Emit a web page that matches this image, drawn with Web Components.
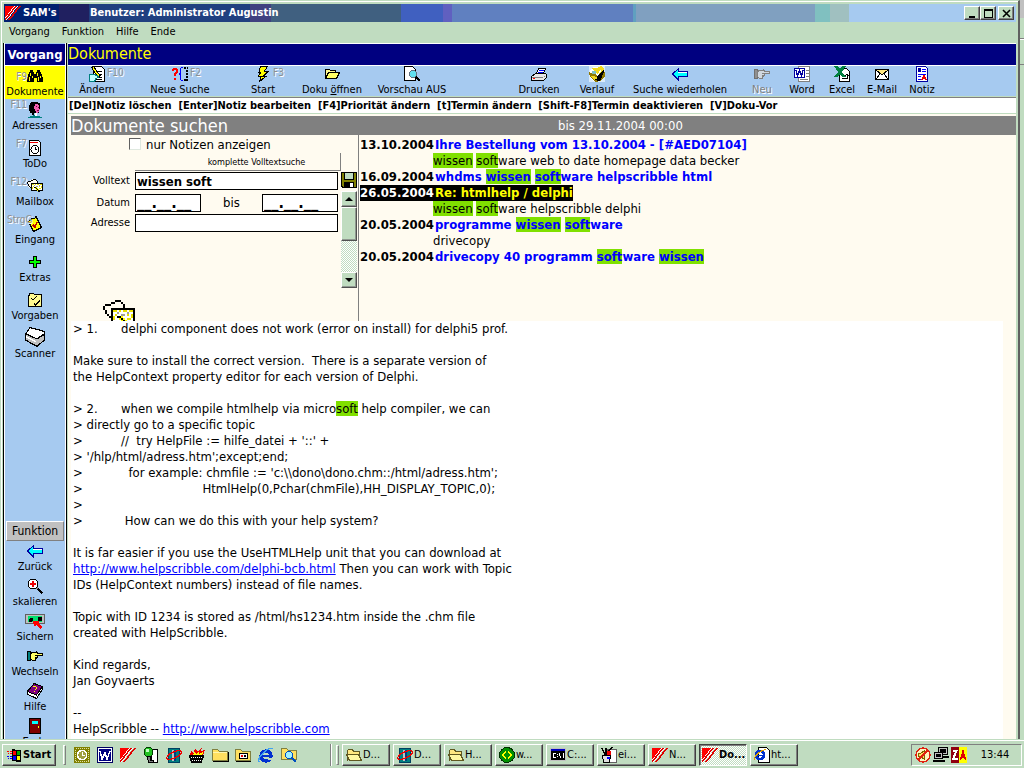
<!DOCTYPE html>
<html lang="de">
<head>
<meta charset="utf-8">
<title>SAM's</title>
<style>
  :root {
    --face: #c0dcc0; --blue: #a6caf0; --cream: #fffbf0; --navy: #000080; --shade: #808080; --hit: #80e000;
    font: 13px/16px "DejaVu Sans Condensed", Tahoma, "DejaVu Sans", sans-serif;
    color: #000;
  }
  html, body { height: 100%; }
  body { margin: 0; overflow: hidden; background: var(--face); }
</style>
</head>
<body>
<sam-desktop></sam-desktop>

<script>
const ICONS = {
  logo: '<path fill="#f00" d="M0 1h9L0 14z"/><path fill="#e00000" d="M14 1h2L5 15H3zM10 1h2L1 15H0v-1z"/><path fill="#fff" d="M9 1h1L0 14v-1zM12 1h1L2 15H1z"/>',
  binocular: '<path d="M3 2h3v2h1v2h2V4h1V2h3v2h1v2h1v3h1v5h-6v-4H7v4H0V9h1V6h1V4h1z"/><path fill="#ff0" d="M3 5h1v3H3zM2 9h1v4H2zM10 5h1v3h-1zM11 9h1v4h-1zM5 8h1v2H5zM13 8h1v2h-1z"/>',
  face: '<path d="M4 0h7v1h2v7h-1v3H7v2H5v-2H3V9H2V3h1V1h1z"/><path fill="#f060b0" d="M8 2h3v1h1v4h1v1h-1v2h-1v1H9V9H8V7H7V4h1z"/><path fill="#800040" d="M9 4h1v1H9zM11 5h1v1h-1zM10 8h2v1h-2z"/><path fill="#008080" d="M1 16v-1h2v-1h3v-1h4v1h3v1h2v1z"/><path fill="#fff" d="M8 11h2v3H8z"/>',
  clock: '<path fill="#fff" stroke="#000" d="M2.500.5h9l2 2v13h-11z"/><path fill="#e00" d="M3 2h8v1H3z"/><circle cx="8" cy="9.500" r="4" fill="#fff" stroke="#000"/><path fill="none" stroke="#000" d="M8.500 7v2.500H10"/>',
  cards: '<path fill="#fffbf0" d="M0 4 6 1l4 1 1 4-6 5-3-1z"/><path d="M6 1h3v1H6zM4 2h2v1H4zM9 2h1v1H9zM3 3h1v1H3zM10 3h1v2h-1zM1 3h2v1H1zM0 4h1v2H0zM1 6h1v2H1zM2 8h1v1H2zM3 9h1v1H3z"/><path fill="#fff" stroke="#000" d="M4.500 5.500h11v7h-11z"/><path fill="#e8e000" d="M5 6h2v1H5zM8 6h1v1H8zM10 6h2v1h-2zM13 6h2v1h-2zM6 8h1v1H6zM12 8h1v1h-1zM14 8h1v2h-1zM5 9h1v2H5zM12 10h2v1h-2z"/><path fill="#a0a0a0" d="M7 7h1v1H7zM9 8h2v1H9zM12 7h1v1h-1z"/><path d="M7 9h2v1H7zM9 10h1v1H9zM10 11h1v1h-1zM11 12h2v2h-2z"/><path fill="#ff0" d="M9 9h1v1H9zM10 10h1v1h-1zM11 11h1v1h-1zM8 10h1v1H8zM9 11h1v1H9zM10 12h1v1h-1z"/>',
  note: '<path fill="#ff0" stroke="#000" d="M1.500 5.500 4 4V2l3 1 2-2.500 5.500 11-8 4z"/><path fill="none" stroke="#c00000" stroke-width="1.500" d="M6 9l2 2 2-5"/>',
  plus: '<path fill="#0f0" stroke="#000" d="M6.500 2.500h3v4h4v3h-4v4h-3v-4h-4v-3h4z"/>',
  checks: '<path fill="#fffa90" stroke="#000" d="M1.500 3.500h1v-2h4l1 1h7v12h-13z"/><path fill="none" stroke="#000" stroke-width="1.400" d="M4 6l2 2 4-4M7 11l2 2 4-5"/>',
  scanner: '<path fill="#fff" stroke="#000" d="M.5 5.500 4 .5l11.500 3v2l-6 4z"/><path fill="#c0c0c0" stroke="#000" d="M.5 5.500l9 4 6-3.500v4.500l-6 5-9-5z"/><path stroke="#fff" d="M1 8l8 4"/>',
  back: '<path fill="#0ff" stroke="#0000a0" d="M.5 8 6.500 2.500v3h9v5h-9V14z"/><path fill="#fff" d="M6 6h9v1H6z"/>',
  zoom: '<circle cx="6" cy="6" r="5" fill="#fff" stroke="#000"/><path fill="#e00" d="M5 3h2v6H5zM3 5h6v2H3z"/><path stroke="#808080" stroke-width="2" d="M10 10l1.500 1.500"/><path stroke="#000" stroke-width="2.500" d="M11 11l4.500 4.500"/>',
  save: '<path fill="#c0c0c0" stroke="#606060" d="M-1.500 1.500h19v9h-19z"/><path fill="#00e070" d="M1 3h14v6H1z"/><circle cx="4" cy="7" r="2"/><circle cx="13" cy="6" r="2.500"/><path fill="#f00" d="M6 8h6v2h-1l4 4-1 2h-1l-4-4-1 1H7v-2H6z"/>',
  hand: '<path fill="#008080" stroke="#000" d="M.5 3.500h3v9h-3z"/><path fill="#ff6" stroke="#000" d="M5.500 4.500h3l1-1 1 2h5v2h-5v2h-1v1h-1v2h-3l-2-2v-5z"/><path stroke="#000" d="M8 7.500h3M8 9.500h2"/>',
  handoff: '<path fill="#909090" stroke="#707070" d="M.5 3.500h3v9h-3z"/><path fill="#d0d8e0" stroke="#808080" d="M5.500 4.500h3l1-1 1 2h5v2h-5v2h-1v1h-1v2h-3l-2-2v-5z"/><path stroke="#808080" d="M8 7.500h3M8 9.500h2"/>',
  book: '<path fill="#fff" stroke="#000" d="M.5 8l9 4 6-8v2l-6 9.500-9-4.500z"/><path fill="#800080" stroke="#000" d="M.5 8.500 7 .5l8.500 3-6 8.500z"/><path fill="#ff0" d="M6 3h3v1H6zM9 4h1v2H9zM8 6h1v1H8zM7 8h1v1H7z"/><path stroke="#fff" d="M2 11l7 3"/>',
  door: '<path fill="#800000" stroke="#000" d="M2.500.5h11v15h-11z"/><path fill="#0ff" d="M5 3h6v3H5z"/><path fill="#ff0" d="M11 8h1v2h-1z"/>',
  edit: '<path fill="#fff" stroke="#000" d="M4.500.5h8l3 3v12h-10z"/><path stroke="#000" d="M8 5.500h5M9 8.500h4M9 11.500h4M7 13.500h6"/><path fill="#ff0" stroke="#000" d="M2.500 1.500l2-1 6.500 9-1 1.500-2-1z"/><path fill="#c0ffff" stroke="#008080" d="M.5 8.500h4l4 1 1 2-3 1v2l-2 1h-4z"/>',
  newsearch: '<path fill="#f00" d="M0 3h1V2h4v1h1v4H5v1H4v2H2V7h1V6h1V4H2v1H0zM2 12h2v2H2z"/><path fill="none" stroke="#00f" d="M10.500 1.500h-1l-1 1V7l-1 1 1 1v4.500l1 1h1"/><path d="M12 1h2v2h-2zM15 1h1v2h-1zM14 4h2v2h-2zM14 7h2v2h-2zM14 10h2v2h-2zM12 13h4v2h-4z"/>',
  bolt: '<path fill="#ff0" stroke="#000" d="M5.500.5h7L9.500 5h4l-5 5h3L4.500 15.500 6.500 10H3.500L6 6H4z"/>',
  open: '<path fill="#fffa90" stroke="#000" d="M1.500 12.500v-9h4l1 1h5v2h-6z"/><path fill="#ff6" stroke="#000" d="M1.500 12.500l3-6h11l-3 6z"/>',
  preview: '<path fill="#fff" stroke="#000" d="M.5.5h8l3 3v11H.5z"/><circle cx="9" cy="8" r="3.500" fill="#60e0f0" stroke="#607080"/><path stroke="#000" stroke-width="2" d="M12 11l4 4"/>',
  printer: '<path fill="#fff" stroke="#000" d="M5.500 7.500l2-5h7l-2 5z"/><path fill="#00f" d="M8 4h5v1H8zM7 6h5v1H7z"/><path fill="#e8e8e8" stroke="#000" d="M.5 10.500l4-3h10l1 1v3l-3 3H.5z"/><path fill="#808080" d="M1 11h11v1H1zM13 10h1v1h-1z"/><path fill="#f00" d="M2 12h2v1H2z"/>',
  history: '<path fill="#fff" d="M0 0h16v16H0z" opacity=".6"/><circle cx="8" cy="8" r="7.500" fill="#fff"/><path fill="#907800" d="M0 6l4 2 5 1 6-7 1 8-4 5-6 1-5-5z"/><path d="M8 9 14 2l1 4-4 9-7-1 4-2z"/><path fill="#f0d820" d="M3 2h5l4-2 3 3-6 6-4-3zM2 10h3l4 2-4 2z"/><path stroke="#fff" d="M4 4l5 5M12 4l-4 6"/><path fill="#80c0c0" d="M3 5h4v3H3z"/>',
  word: '<path fill="#fff" stroke="#808080" d="M4.500.5h11v15h-11z"/><path fill="#808080" d="M12 4h3v1h-3zM12 7h3v1h-3zM12 10h3v1h-3zM6 13h8v1H6z"/><path fill="#fff" stroke="#0000a0" d="M.5 2.500h10v9H.5z"/><path fill="none" stroke="#0000a0" stroke-width="1.500" d="M2 4l1.500 5.500L5.500 5l2 4.500L9 4"/>',
  excel: '<path fill="#fff" stroke="#000" d="M5.500 2.500h7l3 3v10h-10z"/><path fill="#008040" d="M0 0h4l2 3 2-3h4L8 6l4 5H8L6 8l-3 3H0l4-5z"/><path fill="none" stroke="#000" d="M8 12.500h5V9M11 10l2-2 2 2"/>',
  mail: '<path fill="#fff" stroke="#000" d="M1.500 3.500h13v10h-13z"/><path fill="#ffe880" stroke="#000" d="M2 4l6 5 6-5M2 13l4-5M14 13l-4-5"/>',
  memo: '<path fill="#fff" stroke="#0000a0" d="M2.500.5h9l2 2v13h-11z"/><path fill="#00f" d="M8 3h4v1H8zM8 5h4v1H8zM4 8h8v1H4zM4 10h3v1H4zM4 13h3v1H4z"/><path fill="#0000a0" d="M4 2h3v4H4z"/><path fill="none" stroke="#e00" stroke-width="1.500" d="M8 14l2-4 2 4M8 12.500h4"/>',
  disk: '<path fill="#808000" stroke="#000" d="M.5.500h15v15H2L.5 14z"/><path fill="#c0dcc0" stroke="#000" d="M3.500.5h9v7h-9z"/><path d="M3 10h10v6H3z"/><path fill="#fff" d="M9 11h3v4H9z"/>',
  windows: '<path d="M6 2h3v1h6v12h-5v-1H6z"/><path fill="#f00" d="M7 4h3v4H7zM1 4h2v1H1zM4 4h2v1H4zM2 6h1v1H2zM4 6h2v1H4z"/><path fill="#0a0" d="M11 4h3v4h-3z"/><path fill="#00f" d="M7 9h3v4H7zM1 9h2v1H1zM4 9h2v1H4zM2 11h1v1H2zM4 11h2v1H4z"/><path fill="#ff0" d="M11 9h3v4h-3z"/>',
  outlook: '<path fill="#808000" d="M0 0h16v16H0z"/><path fill="none" stroke="#e0e0a0" stroke-dasharray="1 1" d="M1.500 1.500h13v13h-13z"/><circle cx="8" cy="8" r="4.500" fill="#a0a040" stroke="#fff" stroke-width="1.500"/><path fill="none" stroke="#fff" d="M8 5v3h3"/>',
  winword: '<path fill="#000060" d="M0 0h16v16H0z"/><path fill="#fff" d="M1 1h14v14H1z"/><path fill="#000080" d="M2 2h12v12H2z"/><path fill="none" stroke="#fff" stroke-width="1.500" d="M3 4l2 8 3-6 2 6 3-8"/>',
  globe: '<path fill="#fff" stroke="#000" d="M8.500 2.500h6v13h-6z"/><circle cx="5.500" cy="5" r="4.500" fill="#20c020" stroke="#004000"/><path fill="#c0ffc0" d="M3 2h3v3H3z"/><path fill="#808080" stroke="#000" d="M4.500 9.500h3v4h3v2h-5z"/>',
  orbit: '<path fill="#008080" stroke="#004060" d="M2.500 1.500h11v14h-11z"/><path fill="#c0c0c0" d="M6 3h4v11H6z"/><path fill="#004080" d="M8 3h2v11H8z"/><ellipse cx="8" cy="8" rx="8" ry="3" fill="none" stroke="#e00" stroke-width="1.200" transform="rotate(-25 8 8)"/>',
  flame: '<path fill="#e00" d="M1 9l1-5 3 2 1-5 3 4 4-5-1 4 4-1-2 6z"/><path fill="#ff0" d="M4 9l1-4 2 2 3-3v3l4-2-1 4z"/><path d="M0 8h15v3h-1l-1 5H2L1 11H0z"/><path stroke="#fff" stroke-dasharray="1 1" d="M2 10.500h11M3 13.500h9"/>',
  folder: '<path fill="#ffe060" stroke="#808040" d="M.5 13.500v-11h5l2 2h8v9z"/><path fill="#fff8b0" d="M1 5h14v1H1z"/><path d="M1 14h15v1H1zM16 5h1v10h-1z"/>',
  mailfolder: '<path fill="#ffe060" stroke="#808040" d="M.5 13.500v-11h5l2 2h8v9z"/><path fill="#fff" stroke="#000" d="M4.500 6.500h8v5h-8z"/><path fill="#e00" d="M6 8h2v2H6z"/><path d="M9 8h2v2H9zM1 14h15v1H1z"/>',
  ie: '<circle cx="8" cy="9" r="5" fill="none" stroke="#0030d0" stroke-width="3.500"/><path fill="#0030d0" d="M5 8h10v2H5z"/><path fill="#c0dcc0" d="M10 10.500h6v2h-6z"/><path fill="none" stroke="#40a0f0" stroke-width="1.500" d="M1 15C-1 11 9 0 15 1.500"/>',
  findfolder: '<path fill="#ffe060" stroke="#808040" d="M.5 12.500v-11h5l2 2h8v9z"/><circle cx="8" cy="8" r="3.500" fill="#a0f0ff" stroke="#0050c0"/><path stroke="#0050c0" stroke-width="2.500" d="M11 11l4 4"/>',
  openfolder: '<path fill="#ffe880" stroke="#605820" d="M1.500 13.500V4l1-1.500h4l1 2h6v3"/><path fill="#fff8a0" stroke="#605820" d="M.5 7.500h12l3 6h-12z"/>',
  web: '<circle cx="8" cy="8" r="7.500" fill="#009000" stroke="#003000"/><path fill="none" stroke="#ff0" stroke-width="2" d="M7 4.500 3.500 8 7 11.500M9 4.500 12.500 8 9 11.500"/>',
  console: '<path fill="#c0c0c0" d="M0 1h16v13H0z"/><path d="M1 4h14v9H1z"/><path fill="#0000c0" d="M1 2h14v2H1z"/><path fill="#fff" d="M3 6h3v1H3zM3 7h1v3H3zM3 10h3v1H3zM7 7h1v1H7zM7 9h1v1H7zM9 6h1v3H9zM10 9h1v2h-1zM13 6h1v5h-1z"/>',
  paint: '<path fill="#fff" stroke="#606060" d="M6.500 2.500h9v13h-9z"/><path fill="#e0e0e0" stroke="#000" d="M1.500 8.500h8l-1 7h-6z"/><path fill="#e00" d="M6 4h4v4H6z"/><path stroke="#000" stroke-width="1.500" d="M4 8 1 1M5 8 5 1M8 4l3-4"/><path fill="#00f" d="M6 10h3v2H6z"/>',
  iepage: '<path fill="#fff" stroke="#000" d="M4.500.5h8l3 3v12h-11z"/><circle cx="6" cy="8" r="4" fill="none" stroke="#0030d0" stroke-width="2.500"/><path stroke="#0030d0" stroke-width="1.500" d="M3 8.500h7"/><path fill="none" stroke="#e0a000" d="M0 13C0 9 8 2 12 3"/>',
  muted: '<circle cx="8" cy="8" r="7" fill="#fff4c0" stroke="#e02010" stroke-width="1.500"/><path fill="#ffe060" stroke="#806000" d="M3.500 6.500h2l4-3v9l-4-3h-2z"/><path stroke="#e02010" stroke-width="2" d="M13 3 3 13"/>',
  net: '<path fill="#c0c0c0" stroke="#000" d="M5.500.5h9v7h-9z"/><path d="M7 2h6v4H7z"/><path fill="#c0c0c0" stroke="#000" d="M1.500 5.500h8v6h-8z"/><path d="M3 7h5v3H3zM0 13h12v2H0zM9 9h7v2H9z"/>',
  za: '<path fill="#900010" d="M0 0h8v16H0z"/><path fill="#ff0" d="M8 0h8v16H8z"/><path fill="none" stroke="#fff" stroke-width="2" d="M1.500 4h4L2 12h4.500"/><path fill="none" stroke="#e00000" stroke-width="1.500" d="M9.500 13l2.500-9 2.500 9M10 10h4"/>'
};

function define(name, html, after) {
  const tpl = document.createElement('template');
  tpl.innerHTML = html;
  customElements.define(name, class extends HTMLElement {
    constructor() {
      super();
      this.attachShadow({ mode: 'open' }).append(tpl.content.cloneNode(true));
    }
    connectedCallback() { if (after) after(this, this.shadowRoot); }
  });
}

define('sam-icon', `<style>
  :host { display: block; flex: none; width: 16px; height: 16px; }
  svg { display: block; width: 100%; height: 100%; overflow: visible; }
</style><svg viewBox="0 0 16 16" fill="#000" shape-rendering="crispEdges" aria-hidden="true"></svg>`,
(el, root) => { root.querySelector('svg').innerHTML = ICONS[el.getAttribute('name')] || ''; });

define('title-bar', `<style>
  :host { display: flex; align-items: center; height: 18px; margin: 0 2px 0 1px; color: #fff; font-weight: bold; font-size: 11px;
    background: linear-gradient(90deg, #002070 5.4%, #202060 0 8.4%, #204080 0 24.3%, #404080 0 26.4%, #406080 0 39.2%,
      #4060c0 0 43.4%, #6060c0 0 44.3%, #6080c0 0 62.2%, #60a0c0 0 62.5%, #80a0c0 0 80.1%, #80c0c0 0 81.6%, #a0c0c0 0 83.5%, #a6caf0 0); }
  sam-icon { margin-left: 1px; }
  .app { width: 67px; margin-left: 2px; }
  .user { flex: 1; }
  button { width: 16px; height: 14px; padding: 0; border: 1px solid; border-color: #fff #404040 #404040 #fff; background: var(--face);
    box-shadow: inset -1px -1px #808080; display: grid; place-items: center; }
  button:last-of-type { margin: 0 2px; }
  svg { width: 9px; height: 9px; display: block; }
</style>
<sam-icon name="logo"></sam-icon><span class="app">SAM's</span><span class="user">Benutzer: Administrator Augustin</span>
<button aria-label="Minimieren"><svg viewBox="0 0 9 9"><path d="M1 7h6v2H1z"/></svg></button>
<button aria-label="Maximieren"><svg viewBox="0 0 9 9"><path d="M0 0h9v9H0zM1 2v6h7V2z" fill-rule="evenodd"/></svg></button>
<button aria-label="Schließen"><svg viewBox="0 0 9 9"><path d="M1 1l7 7M8 1 1 8" stroke="#000" stroke-width="1.600"/></svg></button>`);

define('menu-bar', `<style>
  :host { display: flex; gap: 12px; align-items: center; height: 19px; padding: 0 0 2px 6px; font-size: 11px; }
  button { font: inherit; color: inherit; background: none; border: 0; padding: 0; }
</style><button>Vorgang</button><button>Funktion</button><button>Hilfe</button><button>Ende</button>`);

define('side-item', `<style>
  :host { display: block; flex: none; height: 38px; font-size: 11px; }
  :host([first]) { height: 34px; }
  :host([tight]) { height: 35px; }
  :host([short]) { height: 33px; }
  :host([active]) { background: #ff0; }
  button { position: relative; display: flex; flex-direction: column; align-items: center; justify-content: flex-end; width: 100%; height: 100%;
    padding: 0; border: 0; background: none; font: inherit; line-height: 14px; color: #000; }
  sam-icon { margin-bottom: 1px; }
  :host([large]) sam-icon { width: 20px; height: 20px; margin: 0; }
  .key { position: absolute; left: 2px; width: 20px; top: 5px; color: #909090; font-size: 10px; line-height: 12px; text-shadow: 1px 1px #fff; text-align: right; white-space: nowrap; }
  :host([first]) .key { top: 0; }
  .key:empty { display: none; }
</style><button><sam-icon></sam-icon><slot></slot><span class="key"></span></button>`,
(el, root) => {
  root.querySelector('.key').textContent = el.getAttribute('key') || '';
  root.querySelector('sam-icon').setAttribute('name', el.getAttribute('icon'));
  root.querySelector('sam-icon').connectedCallback();
});

define('side-bar', `<style>
  :host { display: flex; flex-direction: column; flex: none; width: 60px; background: var(--blue); overflow: hidden;
    border: solid #fff; border-width: 0 1px; box-shadow: -1px 0 #000, 1px 0 #000; margin: 0 1px; }
  h2 { margin: 1px 0 0; height: 21px; flex: none; font-size: 13px; line-height: 22px; text-align: center; color: #fff; background: var(--navy); border-bottom: 1px solid #fff; }
  section { margin-top: auto; margin-bottom: -10px; }
  h3 { margin: 0 1px; font-weight: normal; font-size: 12px; line-height: 18px; text-align: center; background: #c0c0c0;
    border: 1px solid; border-color: #fff #808080 #808080 #fff; }
</style>
<h2>Vorgang</h2>
<side-item active short icon="binocular" key="F9">Dokumente</side-item>
<side-item first icon="face" key="F11">Adressen</side-item>
<side-item icon="clock" key="F7">ToDo</side-item>
<side-item icon="cards" key="F12">Mailbox</side-item>
<side-item icon="note" key="StrgG">Eingang</side-item>
<side-item icon="plus">Extras</side-item>
<side-item icon="checks">Vorgaben</side-item>
<side-item large icon="scanner">Scanner</side-item>
<section>
  <h3>Funktion</h3>
  <side-item short icon="back">Zurück</side-item>
  <side-item tight icon="zoom">skalieren</side-item>
  <side-item tight icon="save">Sichern</side-item>
  <side-item tight icon="hand">Wechseln</side-item>
  <side-item tight icon="book">Hilfe</side-item>
  <side-item tight icon="door">Ende</side-item>
</section>`);

define('tool-button', `<style>
  :host { display: block; flex: none; width: 40px; font-size: 11px; }
  :host([size="s"]) { width: 58px; }
  :host([size="m"]) { width: 80px; }
  :host([size="l"]) { width: 108px; }
  button { position: relative; width: 100%; height: 31px; padding: 0; border: 0; background: none; font: inherit; line-height: 14px; color: #000;
    display: flex; flex-direction: column; align-items: center; gap: 1px; white-space: nowrap; }
  button:disabled { color: #808080; text-shadow: 1px 1px #fff; }
  .key { position: absolute; left: calc(50% + 10px); top: 1px; color: #909090; font-size: 10px; line-height: 12px; text-shadow: 1px 1px #fff; }
</style><button><sam-icon></sam-icon><span><slot></slot></span><span class="key"></span></button>`,
(el, root) => {
  root.querySelector('.key').textContent = el.getAttribute('key') || '';
  root.querySelector('button').disabled = el.hasAttribute('disabled');
  root.querySelector('sam-icon').setAttribute('name', el.getAttribute('icon'));
  root.querySelector('sam-icon').connectedCallback();
});

define('tool-bar', `<style>
  :host { display: flex; height: 30px; background: var(--blue); border-top: 1px solid #fff; border-bottom: 1px solid var(--face); }
  .gap { width: 58px; }
  .sep { width: 8px; }
</style>
<tool-button size="s" icon="edit" key="F10">Ändern</tool-button>
<tool-button size="l" icon="newsearch" key="F2">Neue Suche</tool-button>
<tool-button size="s" icon="bolt" key="F3">Start</tool-button>
<tool-button size="m" icon="open">Doku <u>ö</u>ffnen</tool-button>
<tool-button size="m" icon="preview">Vorschau AUS</tool-button>
<span class="gap"></span>
<tool-button size="s" icon="printer">Drucken</tool-button>
<tool-button size="s" icon="history">Verlauf</tool-button>
<tool-button size="l" icon="back">Suche wiederholen</tool-button>
<span class="sep"></span>
<tool-button disabled icon="handoff">Neu</tool-button>
<tool-button icon="word">Word</tool-button>
<tool-button icon="excel">Excel</tool-button>
<tool-button icon="mail">E-Mail</tool-button>
<tool-button icon="memo">Notiz</tool-button>`);

define('search-form', `<style>
  :host { display: flex; flex: none; width: 288px; gap: 3px; border-right: 1px solid var(--shade); box-sizing: border-box; height: 186px; padding-top: 1px; }
  form { display: grid; grid-template: 17px 19px 22px 20px 19px 1fr / 61px 203px; column-gap: 3px; align-items: start; font-size: 11px; overflow: hidden; width: 270px; margin-right: -3px; }
  .only { grid-column: 1 / 3; display: flex; gap: 5px; padding-left: 58px; font-size: 13px; line-height: 17px; }
  input { box-sizing: border-box; font: inherit; font-size: 13px; color: #000; background: #fff; border: 1px solid #000; height: 18px; padding: 0 1px; margin: 0; width: 100%; border-radius: 0; }
  input[type=checkbox] { appearance: none; width: 12px; height: 12px; margin-top: 2px; padding: 0; border-color: #606060 #dfe8df #dfe8df #606060; }
  .all { grid-column: 2; font: inherit; font-size: 9px; height: 18px; width: 206px; padding: 0 0 0 38px; color: #000; background: none; border: 0; border-right: 1px solid var(--shade); border-bottom: 1px solid var(--shade); }
  label.name { text-align: right; line-height: 18px; padding-right: 2px; }
  .text { font-weight: bold; }
  .dates { display: grid; grid-template-columns: 66px 1fr 76px; text-align: center; font-size: 13px; line-height: 18px; }
  .dates input { font-size: 16px; font-weight: bold; }
  sam-icon.mail { width: 32px; height: 32px; margin: 0 0 -9px 32px; align-self: end; }
  aside { display: flex; flex-direction: column; gap: 3px; width: 16px; padding-top: 36px; }
  .save { padding: 0; border: 0; background: none; }
  .bar { display: flex; flex-direction: column; height: 97px; background: repeating-conic-gradient(#fff 0 25%, var(--face) 0 50%) 0 0 / 2px 2px; }
  .bar > * { border: 1px solid; border-color: #fff #505050 #505050 #fff; box-shadow: inset -1px -1px #909890; background: var(--face); box-sizing: border-box; height: 16px; width: 16px; padding: 0; display: grid; place-items: center; }
  .bar .thumb { height: 34px; }
  .bar button:last-child { margin-top: auto; }
</style>
<form>
  <div class="only"><input type="checkbox" id="n"><label for="n">nur Notizen anzeigen</label></div>
  <button type="button" class="all">komplette Volltextsuche</button>
  <label class="name" for="v">Volltext</label><input class="text" id="v" value="wissen soft">
  <label class="name" for="d">Datum</label>
  <div class="dates"><input id="d" value="__.__.__"><label for="e">bis</label><input id="e" value="__.__.__"></div>
  <label class="name" for="a">Adresse</label><input id="a">
  <sam-icon class="mail" name="cards"></sam-icon>
</form>
<aside>
  <button class="save" aria-label="Speichern"><sam-icon name="disk"></sam-icon></button>
  <div class="bar">
    <button aria-label="Nach oben"><svg width="8" height="4" viewBox="0 0 8 4"><path d="M4 0l4 4H0z"/></svg></button>
    <span class="thumb"></span>
    <button aria-label="Nach unten"><svg width="8" height="4" viewBox="0 0 8 4"><path d="M0 0h8L4 4z"/></svg></button>
  </div>
</aside>`);

define('result-item', `<style>
  :host { display: block; white-space: pre; line-height: 16px; }
  .head { display: flex; width: max-content; font-weight: bold; color: #00f; }
  time { width: 75px; color: #000; }
  :host([selected]) .head { background: #000; color: #ff0; }
  :host([selected]) time { color: #fff; }
  .note { padding-left: 73px; }
</style><div class="head"><time></time><slot name="title"></slot></div><div class="note"><slot></slot></div>`,
(el, root) => { root.querySelector('time').textContent = el.getAttribute('date'); });

define('result-list', `<style>
  :host { display: block; flex: 1; padding: 2px 1px; }
  mark { background: var(--hit); color: inherit; }
</style>
<result-item date="13.10.2004"><span slot="title">Ihre Bestellung vom 13.10.2004 - [#AED07104]</span><mark>wissen</mark> <mark>soft</mark>ware web to date homepage data becker</result-item>
<result-item date="16.09.2004"><span slot="title">whdms <mark>wissen</mark> <mark>soft</mark>ware helpscribble html</span></result-item>
<result-item date="26.05.2004" selected><span slot="title">Re: htmlhelp / delphi</span><mark>wissen</mark> <mark>soft</mark>ware helpscribble delphi</result-item>
<result-item date="20.05.2004"><span slot="title">programme <mark>wissen</mark> <mark>soft</mark>ware</span>drivecopy</result-item>
<result-item date="20.05.2004"><span slot="title">drivecopy 40 programm <mark>soft</mark>ware <mark>wissen</mark></span></result-item>`);

define('mail-text', `<style>
  :host { display: block; flex: 1; min-height: 0; margin-right: 13px; padding-left: 2px; background: #fff; overflow: hidden; }
  pre { margin: 0; font: inherit; line-height: 16px; tab-size: 48px; }
  mark { background: var(--hit); }
  a { color: #00f; }
</style><pre>&gt; 1.\tdelphi component does not work (error on install) for delphi5 prof.

Make sure to install the correct version.  There is a separate version of
the HelpContext property editor for each version of Delphi.

&gt; 2.\twhen we compile htmlhelp via micro<mark>soft</mark> help compiler, we can
&gt; directly go to a specific topic
&gt;\t//  try HelpFile := hilfe_datei + '::' +
&gt; '/hlp/html/adress.htm';except;end;
&gt;\t  for example: chmfile := 'c:\\\\dono\\dono.chm::/html/adress.htm';
&gt;\t\t         HtmlHelp(0,Pchar(chmFile),HH_DISPLAY_TOPIC,0);
&gt;
&gt;\t How can we do this with your help system?

It is far easier if you use the UseHTMLHelp unit that you can download at
<a href="#">http://www.helpscribble.com/delphi-bcb.html</a> Then you can work with Topic
IDs (HelpContext numbers) instead of file names.

Topic with ID 1234 is stored as /html/hs1234.htm inside the .chm file
created with HelpScribble.

Kind regards,
Jan Goyvaerts

--
HelpScribble -- <a href="#">http://www.helpscribble.com</a></pre>`);

define('task-button', `<style>
  :host { display: block; flex: none; width: 48px; }
  button { display: flex; align-items: center; gap: 1px; width: 100%; height: 22px; padding: 0 0 0 3px; font: inherit; font-size: 11px; color: #000; white-space: nowrap;
    background: var(--face); border: 1px solid; border-color: #fff #404040 #404040 #fff; box-shadow: inset -1px -1px #808080; }
  :host([start]) { width: 54px; }
  :host([start]) button { font-weight: bold; }
  :host([active]) button { font-weight: bold; border-color: #404040 #fff #fff #404040; box-shadow: inset 1px 1px #808080;
    background: repeating-conic-gradient(#fff 0 25%, var(--face) 0 50%) 0 0 / 2px 2px; padding-left: 2px; }
</style><button><sam-icon></sam-icon><span><slot></slot></span></button>`,
(el, root) => {
  root.querySelector('sam-icon').setAttribute('name', el.getAttribute('icon'));
  root.querySelector('sam-icon').connectedCallback();
});

define('task-bar', `<style>
  :host { display: flex; flex: none; align-items: center; height: 24px; padding: 2px 2px 1px; border-top: 1px solid #fff; margin-top: 1px; background: var(--face); font-size: 11px; }
  .grip { width: 1px; height: 18px; border: 1px solid; border-color: #fff #808080 #808080 #fff; margin: 0 8px 0 7px; }
  .line { width: 1px; height: 22px; background: #808080; border-right: 1px solid #fff; }
  .quick { display: flex; gap: 7px; width: 256px; }
  .tasks { display: flex; gap: 3px; flex: 1; }
  .grip.second { margin: 0 3px 0 4px; }
  .tray { display: flex; align-items: center; gap: 2px; height: 20px; width: 106px; padding-left: 3px; border: 1px solid; border-color: #808080 #fff #fff #808080; }
  time { flex: 1; text-align: center; }
</style>
<task-button start icon="windows">Start</task-button><span class="grip"></span>
<div class="quick"><sam-icon name="outlook"></sam-icon><sam-icon name="winword"></sam-icon><sam-icon name="logo"></sam-icon><sam-icon name="globe"></sam-icon><sam-icon name="orbit"></sam-icon><sam-icon name="flame"></sam-icon><sam-icon name="folder"></sam-icon><sam-icon name="mailfolder"></sam-icon><sam-icon name="ie"></sam-icon><sam-icon name="findfolder"></sam-icon></div>
<span class="line"></span><span class="grip second"></span>
<div class="tasks">
<task-button icon="openfolder">D...</task-button><task-button icon="orbit">D...</task-button><task-button icon="openfolder">H...</task-button>
<task-button icon="web">w...</task-button><task-button icon="console">C:...</task-button><task-button icon="paint">ei...</task-button>
<task-button icon="logo">N...</task-button><task-button active icon="logo">Do...</task-button><task-button icon="iepage">ht...</task-button>
</div>
<div class="tray"><sam-icon name="muted"></sam-icon><sam-icon name="net"></sam-icon><sam-icon name="za"></sam-icon><time>13:44</time></div>`);

define('sam-desktop', `<style>
  :host { display: flex; flex-direction: column; height: 100vh; background: var(--face); }
  .screen { display: flex; flex: 1; min-height: 0; }
  .window { flex: 1; min-width: 0; display: flex; flex-direction: column; box-sizing: border-box; padding: 3px 0 0 2px; border-top: 1px solid var(--face); border-left: 1px solid var(--face); border-right: 2px solid #606060; box-shadow: inset 1px 1px #fff; }
  .behind { width: 4px; display: flex; flex-direction: column; }
  .behind i { height: 18px; background: #c0c0c0; border-bottom: 20px solid var(--face); }
  .behind b { height: 25px; border-top: 1px solid var(--shade); border-bottom: 1px solid var(--shade); box-shadow: inset 0 1px #fff; }
  .body { display: flex; flex: 1; min-height: 0; margin-right: 2px; }
  main { flex: 1; min-width: 0; display: flex; flex-direction: column; margin-left: 1px; background: var(--cream); border-top: 1px solid #fff; }
  h1 { margin: 0; font-size: 16px; font-weight: normal; line-height: 19px; height: 21px; background: var(--navy); color: #ff0; }
  .keys { background: #fff; border-top: 1px solid var(--shade); border-bottom: 1px solid var(--face); font-weight: bold; font-size: 11px; line-height: 15px; white-space: pre; overflow: hidden; padding-left: 1px; }
  .head { display: grid; grid-template-columns: 487px 1fr; align-items: center; margin: 2px 0 0 3px; height: 19px; background: var(--shade); color: #fff; }
  h2 { margin: 0; font-size: 18px; line-height: 19px; font-weight: normal; }
  .query { display: flex; margin-left: 3px; }
  mail-text { margin-left: 3px; }
</style>
<div class="screen">
  <div class="window">
    <title-bar></title-bar>
    <menu-bar></menu-bar>
    <div class="body">
      <side-bar></side-bar>
      <main>
        <h1>Dokumente</h1>
        <tool-bar></tool-bar>
        <div class="keys">[Del]Notiz löschen  [Enter]Notiz bearbeiten  [F4]Priorität ändern  [t]Termin ändern  [Shift-F8]Termin deaktivieren  [V]Doku-Vor</div>
        <div class="head"><h2>Dokumente suchen</h2><span>bis 29.11.2004 00:00</span></div>
        <div class="query"><search-form></search-form><result-list></result-list></div>
        <mail-text></mail-text>
      </main>
    </div>
  </div>
  <div class="behind"><i></i><b></b></div>
</div>
<task-bar></task-bar>`);
</script>
</body>
</html>
